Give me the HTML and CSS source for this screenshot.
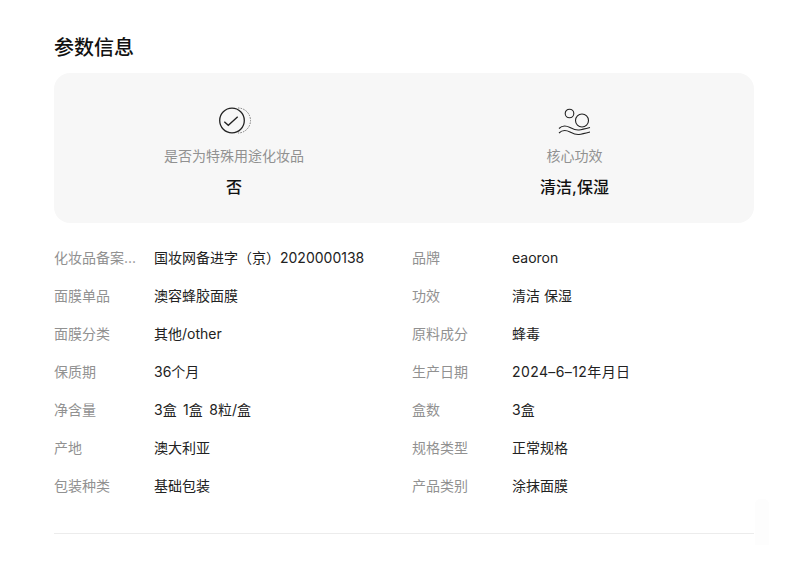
FILE: index.html
```html
<!DOCTYPE html>
<html lang="zh-CN">
<head>
<meta charset="utf-8">
<title>参数信息</title>
<link rel="stylesheet" href="styles.css">
</head>
<body>
<main class="page">
  <h2 class="title">参数信息</h2>
  <section class="card">
    <div class="feature">
      <svg class="icon" width="34" height="32" viewBox="0 0 34 32" fill="none">
        <circle cx="15" cy="15.500" r="12.300" stroke="#222" stroke-width="1.300"/>
        <path d="M7.300 16.700l4 3.600 9.400-8.600" stroke="#222" stroke-width="1.300"/>
        <path d="M21 3A12.500 12.500 0 0 1 21 28" stroke="#777" stroke-width="1" stroke-dasharray="1.500 1.200"/>
      </svg>
      <div class="feature-label">是否为特殊用途化妆品</div>
      <div class="feature-value">否</div>
    </div>
    <div class="feature">
      <svg class="icon" width="34" height="32" viewBox="0 0 34 32" fill="none" stroke="#222" stroke-width="1.100">
        <circle cx="11.500" cy="8.500" r="4.300"/>
        <circle cx="24" cy="15.500" r="6.500"/>
        <path d="M1 23.500C4 20.500 8 20.500 12 22.500S18 25.500 21 25 28 23.500 32 22.500"/>
        <path d="M1 28C4 25 8 25 12 27S18 30 21 29.500 28 28 32 27"/>
      </svg>
      <div class="feature-label">核心功效</div>
      <div class="feature-value">清洁,保湿</div>
    </div>
  </section>
  <dl class="params">
    <div class="param"><dt>化妆品备案...</dt><dd>国妆网备进字（京）2020000138</dd></div>
    <div class="param"><dt>品牌</dt><dd>eaoron</dd></div>
    <div class="param"><dt>面膜单品</dt><dd>澳容蜂胶面膜</dd></div>
    <div class="param"><dt>功效</dt><dd>清洁 保湿</dd></div>
    <div class="param"><dt>面膜分类</dt><dd>其他/other</dd></div>
    <div class="param"><dt>原料成分</dt><dd>蜂毒</dd></div>
    <div class="param"><dt>保质期</dt><dd>36个月</dd></div>
    <div class="param"><dt>生产日期</dt><dd class="date">2024–6–12年月日</dd></div>
    <div class="param"><dt>净含量</dt><dd class="wide-spaces">3盒 1盒 8粒/盒</dd></div>
    <div class="param"><dt>盒数</dt><dd>3盒</dd></div>
    <div class="param"><dt>产地</dt><dd>澳大利亚</dd></div>
    <div class="param"><dt>规格类型</dt><dd>正常规格</dd></div>
    <div class="param"><dt>包装种类</dt><dd>基础包装</dd></div>
    <div class="param"><dt>产品类别</dt><dd>涂抹面膜</dd></div>
  </dl>
  <hr class="rule">
</main>
<div class="watermark"></div>
</body>
</html>
```

FILE: styles.css
```css
* { box-sizing: border-box; }
html, body { margin: 0; padding: 0; background: #fff; }
body {
  position: relative;
  width: 806px;
  height: 567px;
  overflow: hidden;
  font-family: Inter, "Noto Sans CJK SC", sans-serif;
  color: #1f1f1f;
}
.page { width: 700px; margin-left: 54px; padding-top: 34px; }
.title { margin: 0; font-size: 20px; line-height: 28px; font-weight: 500; color: #111; }
.card {
  margin-top: 11px;
  height: 150px;
  display: grid;
  grid-template-columns: 342px 339px;
  padding: 0 9px;
  background: #f7f7f7;
  border-radius: 16px;
}
.feature { display: flex; flex-direction: column; align-items: center; padding-top: 32px; }
.icon { display: block; }
.feature-label { margin-top: 9px; font-size: 14px; line-height: 20px; color: #919191; }
.feature-value { margin-top: 10px; font-size: 16px; line-height: 22px; font-weight: 500; color: #111; }
.params {
  margin: 16px 0 0;
  display: grid;
  grid-template-columns: 358px 342px;
  grid-auto-rows: 38px;
}
.param { display: flex; align-items: center; font-size: 14px; line-height: 20px; }
.param dt { width: 100px; color: #919191; white-space: nowrap; }
.param dd { margin: 0; color: #222; white-space: nowrap; }
.param dd.wide-spaces { word-spacing: 2.5px; }
.param dd.date { letter-spacing: 0.4px; }
.rule { margin: 28px 0 0; border: 0; border-top: 1px solid #ececec; }
.watermark {
  position: absolute;
  left: 755px;
  top: 499px;
  width: 14px;
  height: 46px;
  background: #fdfdfd;
  border-radius: 5px 5px 0 0;
}
```
